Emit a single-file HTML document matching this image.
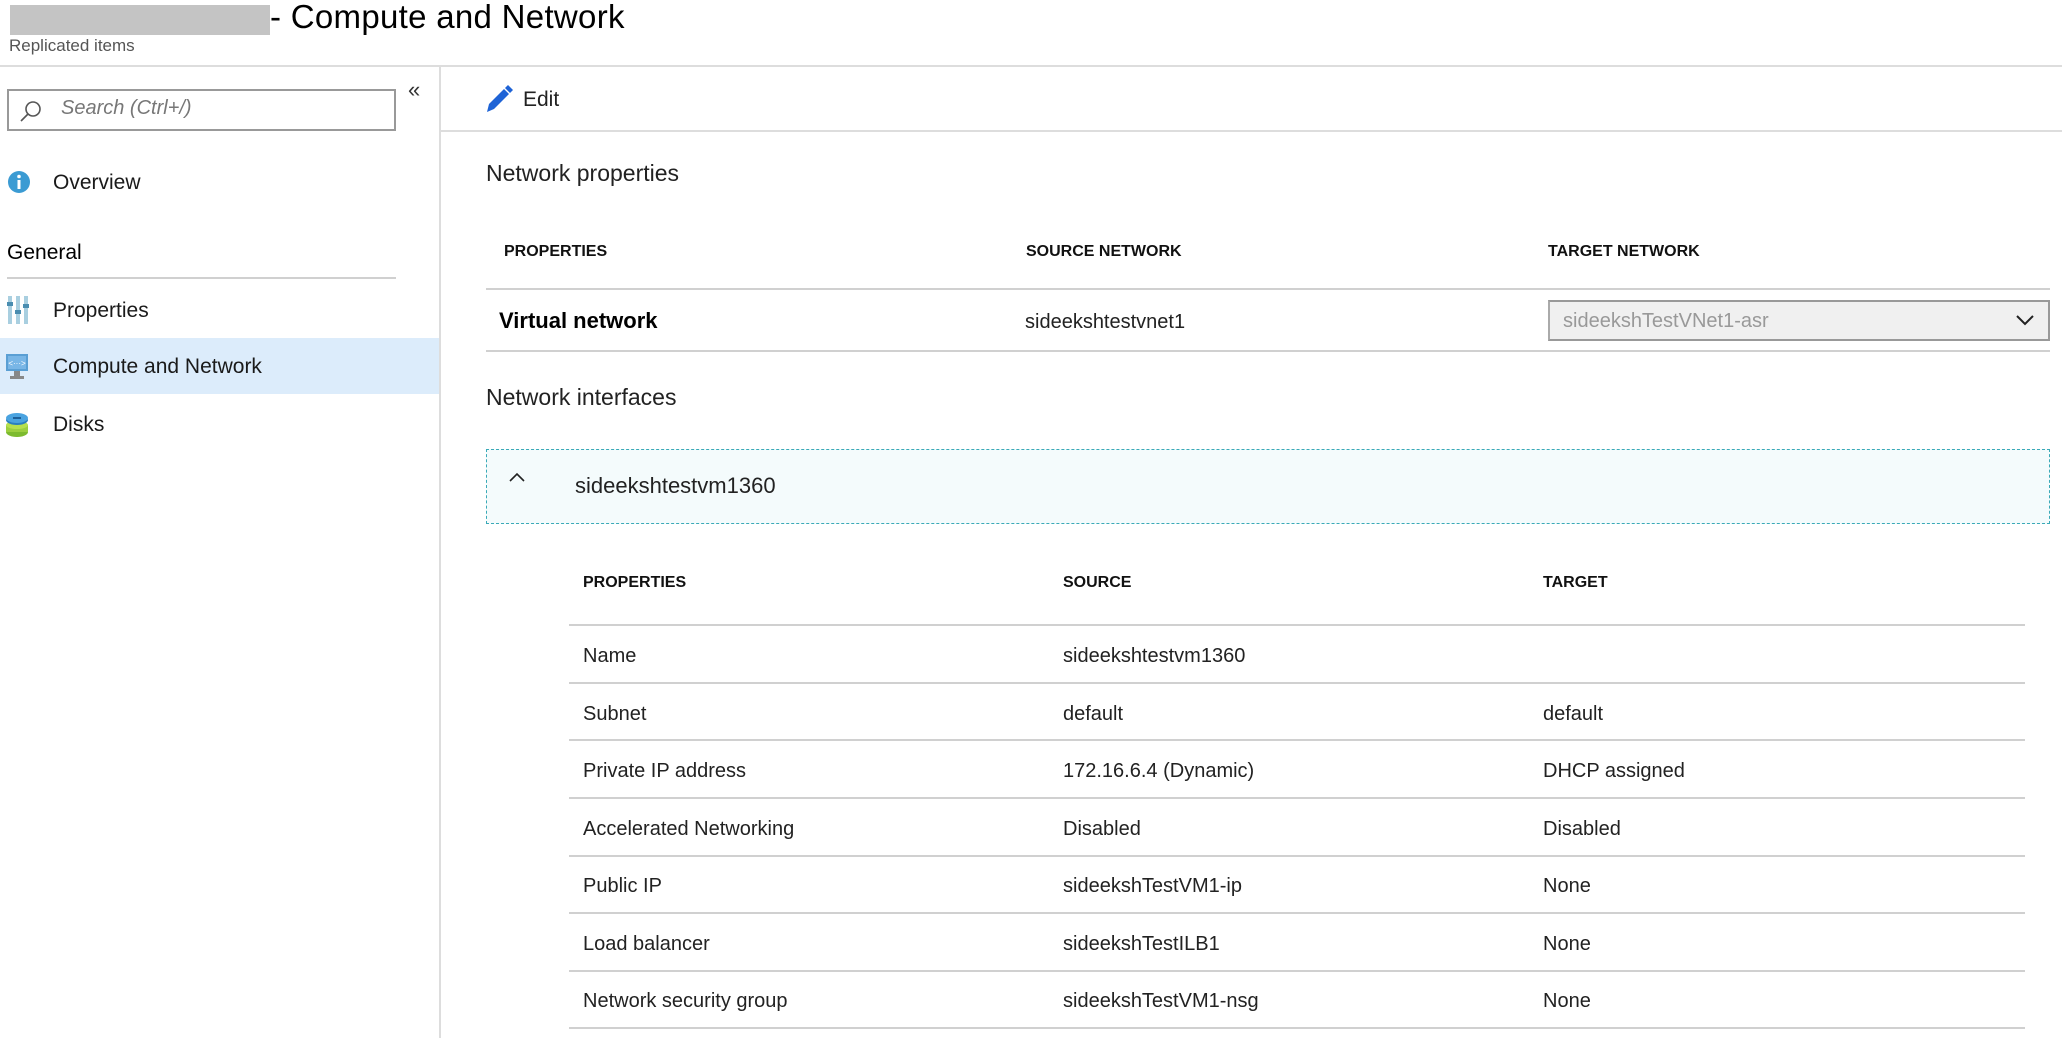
<!DOCTYPE html>
<html><head><meta charset="utf-8"><style>
*{margin:0;padding:0;box-sizing:border-box}
body{width:2062px;height:1038px;background:#fff;font-family:"Liberation Sans",sans-serif;color:#1a1a1a;position:relative;overflow:hidden}
.a{position:absolute;white-space:nowrap}
.hl{position:absolute;height:2px;background:#d0d0d0}
.th{font-weight:bold;font-size:16px;color:#111}
.td{font-size:20px;color:#222}
</style></head><body>
<div class="a" style="left:10px;top:5px;width:260px;height:30px;background:#c4c4c4"></div>
<div class="a" style="left:270px;top:-2px;font-size:33px;color:#000;letter-spacing:0.3px">- Compute and Network</div>
<div class="a" style="left:9px;top:36px;font-size:17px;color:#555">Replicated items</div>
<div class="hl" style="left:0;top:65px;width:2062px;background:#ddd"></div>
<div class="a" style="left:439px;top:66px;width:2px;height:972px;background:#ddd"></div>

<div class="a" style="left:7px;top:89px;width:389px;height:42px;border:2px solid #999"></div>
<svg class="a" style="left:18px;top:98px" width="26" height="26" viewBox="0 0 26 26"><circle cx="15" cy="11" r="7" fill="none" stroke="#555" stroke-width="1.6"/><line x1="10" y1="16" x2="3" y2="23" stroke="#555" stroke-width="1.6"/></svg>
<div class="a" style="left:61px;top:97px;font-size:20px;font-style:italic;color:#777">Search (Ctrl+/)</div>
<div class="a" style="left:408px;top:77px;font-size:22px;color:#333">«</div>

<svg class="a" style="left:7px;top:170px" width="24" height="24"><circle cx="12" cy="12" r="11" fill="#3b9bd3"/><rect x="10.5" y="10" width="3" height="9" fill="#fff"/><circle cx="12" cy="6.5" r="1.8" fill="#fff"/></svg>
<div class="a" style="left:53px;top:171px;font-size:21px">Overview</div>
<div class="a" style="left:7px;top:241px;font-size:21px;color:#000">General</div>
<div class="hl" style="left:7px;top:277px;width:389px"></div>
<svg class="a" style="left:7px;top:296px" width="22" height="28"><g fill="#a9cfe0"><rect x="1" y="0" width="4" height="28"/><rect x="9" y="0" width="4" height="28"/><rect x="17" y="0" width="4" height="28"/></g><g fill="#4a8db0"><rect x="0" y="6" width="6" height="4"/><rect x="8" y="14" width="6" height="4"/><rect x="16" y="8" width="6" height="4"/></g></svg>
<div class="a" style="left:53px;top:299px;font-size:21px">Properties</div>
<div class="a" style="left:0;top:338px;width:439px;height:56px;background:#dcecfb"></div>
<svg class="a" style="left:6px;top:354px" width="22" height="26"><rect x="0" y="0" width="22" height="17" fill="#5a9fd4"/><rect x="2" y="2" width="18" height="13" fill="#79b6e6"/><text x="11" y="12" font-size="8" fill="#fff" text-anchor="middle" font-family="Liberation Sans">&lt;···&gt;</text><rect x="8" y="17" width="6" height="5" fill="#888"/><rect x="4" y="22" width="14" height="3" fill="#888"/></svg>
<div class="a" style="left:53px;top:355px;font-size:21px">Compute and Network</div>
<svg class="a" style="left:6px;top:412px" width="22" height="26"><ellipse cx="11" cy="20" rx="11" ry="5" fill="#7dbb2f"/><rect x="0" y="13" width="22" height="7" fill="#9ccf3f"/><ellipse cx="11" cy="13" rx="11" ry="4" fill="#b6e04f"/><ellipse cx="11" cy="8" rx="11" ry="5" fill="#2a7fc0"/><ellipse cx="11" cy="6" rx="11" ry="5" fill="#4aa3e0"/><rect x="7" y="5" width="8" height="2" fill="#1d5f99"/></svg>
<div class="a" style="left:53px;top:413px;font-size:21px">Disks</div>

<svg class="a" style="left:484px;top:84px" width="30" height="30" viewBox="0 0 30 30"><path d="M3 28 L5 20 L20 5 L25 10 L10 25 Z" fill="#1e63d6"/><path d="M21 4 L24 1 L29 6 L26 9 Z" fill="#1e63d6"/></svg>
<div class="a" style="left:523px;top:88px;font-size:21px;color:#222">Edit</div>
<div class="hl" style="left:441px;top:130px;width:1621px;background:#ddd"></div>

<div class="a" style="left:486px;top:160px;font-size:23px;color:#222">Network properties</div>
<div class="a th" style="left:504px;top:243px">PROPERTIES</div>
<div class="a th" style="left:1026px;top:243px">SOURCE NETWORK</div>
<div class="a th" style="left:1548px;top:243px">TARGET NETWORK</div>
<div class="hl" style="left:486px;top:288px;width:1564px"></div>
<div class="a" style="left:499px;top:308px;font-size:22px;font-weight:bold;color:#000">Virtual network</div>
<div class="a td" style="left:1025px;top:311px">sideekshtestvnet1</div>
<div class="a" style="left:1548px;top:300px;width:502px;height:41px;border:2px solid #999;border-left-color:#aaa;background:#f0f0f0"></div>
<div class="a" style="left:1563px;top:310px;font-size:20px;color:#999">sideekshTestVNet1-asr</div>
<svg class="a" style="left:2015px;top:313px" width="20" height="14"><path d="M2 3 L10 11 L18 3" fill="none" stroke="#222" stroke-width="2"/></svg>
<div class="hl" style="left:486px;top:350px;width:1564px"></div>

<div class="a" style="left:486px;top:384px;font-size:23px;color:#222">Network interfaces</div>
<div class="a" style="left:486px;top:449px;width:1564px;height:75px;background:#f4fbfc;border:1.5px dashed #3aaab8"></div>
<svg class="a" style="left:508px;top:471px" width="18" height="12"><path d="M2 10 L9 3 L16 10" fill="none" stroke="#222" stroke-width="1.6"/></svg>
<div class="a" style="left:575px;top:473px;font-size:22px;color:#222">sideekshtestvm1360</div>

<div class="a th" style="left:583px;top:574px">PROPERTIES</div>
<div class="a th" style="left:1063px;top:574px">SOURCE</div>
<div class="a th" style="left:1543px;top:574px">TARGET</div>
<div class="hl" style="left:569px;top:624px;width:1456px"></div>

<div class="a td" style="left:583px;top:645px">Name</div><div class="a td" style="left:1063px;top:645px">sideekshtestvm1360</div>
<div class="hl" style="left:569px;top:682px;width:1456px"></div>
<div class="a td" style="left:583px;top:703px">Subnet</div><div class="a td" style="left:1063px;top:703px">default</div><div class="a td" style="left:1543px;top:703px">default</div>
<div class="hl" style="left:569px;top:739px;width:1456px"></div>
<div class="a td" style="left:583px;top:760px">Private IP address</div><div class="a td" style="left:1063px;top:760px">172.16.6.4 (Dynamic)</div><div class="a td" style="left:1543px;top:760px">DHCP assigned</div>
<div class="hl" style="left:569px;top:797px;width:1456px"></div>
<div class="a td" style="left:583px;top:818px">Accelerated Networking</div><div class="a td" style="left:1063px;top:818px">Disabled</div><div class="a td" style="left:1543px;top:818px">Disabled</div>
<div class="hl" style="left:569px;top:855px;width:1456px"></div>
<div class="a td" style="left:583px;top:875px">Public IP</div><div class="a td" style="left:1063px;top:875px">sideekshTestVM1-ip</div><div class="a td" style="left:1543px;top:875px">None</div>
<div class="hl" style="left:569px;top:912px;width:1456px"></div>
<div class="a td" style="left:583px;top:933px">Load balancer</div><div class="a td" style="left:1063px;top:933px">sideekshTestILB1</div><div class="a td" style="left:1543px;top:933px">None</div>
<div class="hl" style="left:569px;top:970px;width:1456px"></div>
<div class="a td" style="left:583px;top:990px">Network security group</div><div class="a td" style="left:1063px;top:990px">sideekshTestVM1-nsg</div><div class="a td" style="left:1543px;top:990px">None</div>
<div class="hl" style="left:569px;top:1027px;width:1456px"></div>
</body></html>
